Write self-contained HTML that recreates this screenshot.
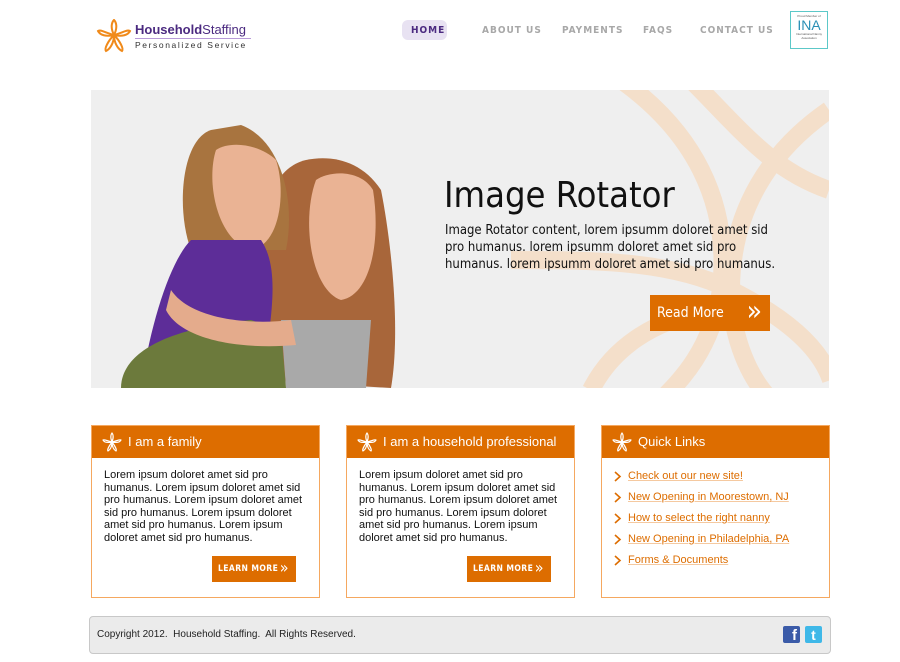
<!DOCTYPE html>
<html><head><meta charset="utf-8"><style>
*{margin:0;padding:0;box-sizing:border-box}
body{width:900px;height:662px;background:#fff;font-family:"Liberation Sans",sans-serif;position:relative;overflow:hidden}
.abs{position:absolute}
.nav{position:absolute;top:25px;font-family:"DejaVu Sans Condensed","Liberation Sans Narrow",sans-serif;font-size:10px;font-weight:bold;letter-spacing:1px;color:#a8a8a8}
.box{position:absolute;top:425px;width:229px;height:173px;border:1px solid #f5a860;background:#fff}
.box .hd{height:32px;background:#dd6d00;color:#fff;font-size:13px;line-height:32px;padding-left:36px;position:relative}
.box .hd svg{position:absolute;left:10px;top:6px}
.box p{font-size:11px;line-height:12.6px;color:#111;padding:11px 0 0 12px;white-space:nowrap}
.lm{position:absolute;left:120px;top:130px;width:84px;height:26px;background:#dd6d00;color:#fff;font-family:"DejaVu Sans Condensed",sans-serif;font-size:8.5px;font-weight:bold;letter-spacing:0.4px;line-height:26px;padding-left:6px}
.lm span{position:absolute;right:7px;top:-1px;font-size:16px;font-weight:normal}
.ql{font-size:11px;color:#dd6d00;position:absolute;left:26px;text-decoration:underline;text-decoration-color:#f5c9a0}
</style></head><body>
<svg class="abs" style="left:96px;top:19px" width="36" height="34" viewBox="0 0 36 34"><g fill="none" stroke="#f08a1a" stroke-width="2"><path d="M18 16 C14 8 16 3 18 1 C20 3 22 8 18 16Z"/><path d="M18 16 C10 14 4 10 2 12 C4 16 10 18 18 16Z"/><path d="M18 16 C26 14 32 10 34 12 C32 16 26 18 18 16Z"/><path d="M18 16 C12 22 8 30 10 32 C14 30 18 24 18 16Z"/><path d="M18 16 C24 22 28 30 26 32 C22 30 18 24 18 16Z"/></g></svg>
<div class="abs" style="left:135px;top:22px;font-size:13px;color:#4b2a80"><b>Household</b>Staffing</div>
<div class="abs" style="left:135px;top:38px;width:116px;border-top:1px solid #b79ad8"></div>
<div class="abs" style="left:135px;top:40px;font-size:8.5px;letter-spacing:1.6px;color:#333">Personalized Service</div>
<div class="abs" style="left:402px;top:20px;width:45px;height:20px;background:#e8e2f2;border-radius:6px"></div>
<div class="nav" style="left:411px;color:#4b2a80">HOME</div>
<div class="nav" style="left:482px">ABOUT US</div>
<div class="nav" style="left:562px">PAYMENTS</div>
<div class="nav" style="left:643px">FAQS</div>
<div class="nav" style="left:700px">CONTACT US</div>
<div class="abs" style="left:790px;top:11px;width:38px;height:38px;border:1px solid #5cc8c8;text-align:center;font-size:3px;color:#555;padding-top:2px">Proud Member of<div style="font-size:14px;color:#2a8fb5;line-height:14px">INA</div>International Nanny Association</div>
<div class="abs" style="left:91px;top:90px;width:738px;height:298px;background:#efefef;overflow:hidden">
<svg width="738" height="298" style="position:absolute;left:0;top:0">
<g fill="none" stroke="#f4dfca" stroke-width="18">
<path d="M530 -10 C600 40 640 110 630 200 C620 260 590 290 570 310"/>
<path d="M738 20 C680 60 640 120 640 200 C640 250 660 290 680 310"/>
<path d="M420 170 C500 170 580 170 640 200 C700 230 730 260 740 290"/>
<path d="M600 -10 C650 40 680 80 738 100"/>
<path d="M500 300 C520 260 560 230 620 220"/>
</g>
<path d="M215 70 C170 80 155 160 170 290 L300 298 C310 240 300 150 290 100 C270 70 240 65 215 70Z" fill="#a8663a"/>
<path d="M120 40 C90 50 85 120 100 160 L195 160 C205 110 190 50 150 35Z" fill="#a8743f"/>
<path d="M125 60 C115 90 125 150 160 160 C190 155 195 100 185 70 C170 55 140 50 125 60Z" fill="#eab394"/>
<path d="M225 90 C210 130 220 200 250 210 C280 205 290 150 282 100 C270 80 240 80 225 90Z" fill="#eab394"/>
<path d="M100 150 C80 170 60 230 50 298 L170 298 C180 230 190 180 170 150Z" fill="#5d2d98"/>
<path d="M190 230 L280 230 L275 298 L195 298Z" fill="#a9a9a9"/>
<path d="M30 298 C30 270 60 240 160 230 L190 240 L195 298Z" fill="#6c7a3c"/>
<path d="M80 200 C100 230 160 235 200 230 L205 255 C150 260 90 250 75 220Z" fill="#e4ab8c"/>
</svg>
<div class="abs" style="left:353px;top:85px;font-family:'DejaVu Sans Condensed','DejaVu Sans',sans-serif;font-size:36px;color:#111">Image Rotator</div>
<div class="abs" style="left:354px;top:132px;white-space:nowrap;font-family:'DejaVu Sans Condensed','DejaVu Sans',sans-serif;font-size:13px;line-height:17px;color:#111">Image Rotator content, lorem ipsumm doloret amet sid<br>pro humanus. lorem ipsumm doloret amet sid pro<br>humanus. lorem ipsumm doloret amet sid pro humanus.</div>
<div class="abs" style="left:559px;top:205px;width:120px;height:36px;background:#dd6d00;color:#fff;font-family:'DejaVu Sans Condensed',sans-serif;font-size:14px;line-height:36px;padding-left:7px">Read More<span style="position:absolute;right:8px;font-size:28px;top:-2px">»</span></div>
</div>
<div class="box" style="left:91px"><div class="hd"><svg width="20" height="20" viewBox="0 0 20 20" fill="none" stroke="#fff" stroke-width="1.2"><path d="M10 10C8 5 9 2 10 1C11 2 12 5 10 10ZM10 10C5 9 2 7 1 8C2 10 5 11 10 10ZM10 10C15 9 18 7 19 8C18 10 15 11 10 10ZM10 10C7 14 5 18 6 19C8 18 10 15 10 10ZM10 10C13 14 15 18 14 19C12 18 10 15 10 10Z"/></svg>I am a family</div>
<p>Lorem ipsum doloret amet sid pro<br>humanus. Lorem ipsum doloret amet sid<br>pro humanus. Lorem ipsum doloret amet<br>sid pro humanus. Lorem ipsum doloret<br>amet sid pro humanus. Lorem ipsum<br>doloret amet sid pro humanus.</p>
<div class="lm">LEARN MORE<span>»</span></div></div>
<div class="box" style="left:346px"><div class="hd"><svg width="20" height="20" viewBox="0 0 20 20" fill="none" stroke="#fff" stroke-width="1.2"><path d="M10 10C8 5 9 2 10 1C11 2 12 5 10 10ZM10 10C5 9 2 7 1 8C2 10 5 11 10 10ZM10 10C15 9 18 7 19 8C18 10 15 11 10 10ZM10 10C7 14 5 18 6 19C8 18 10 15 10 10ZM10 10C13 14 15 18 14 19C12 18 10 15 10 10Z"/></svg>I am a household professional</div>
<p>Lorem ipsum doloret amet sid pro<br>humanus. Lorem ipsum doloret amet sid<br>pro humanus. Lorem ipsum doloret amet<br>sid pro humanus. Lorem ipsum doloret<br>amet sid pro humanus. Lorem ipsum<br>doloret amet sid pro humanus.</p>
<div class="lm">LEARN MORE<span>»</span></div></div>
<div class="box" style="left:601px"><div class="hd"><svg width="20" height="20" viewBox="0 0 20 20" fill="none" stroke="#fff" stroke-width="1.2"><path d="M10 10C8 5 9 2 10 1C11 2 12 5 10 10ZM10 10C5 9 2 7 1 8C2 10 5 11 10 10ZM10 10C15 9 18 7 19 8C18 10 15 11 10 10ZM10 10C7 14 5 18 6 19C8 18 10 15 10 10ZM10 10C13 14 15 18 14 19C12 18 10 15 10 10Z"/></svg>Quick Links</div>
<div class="abs" style="left:0;top:44px;width:227px">
<svg class="abs" style="left:12px;top:1px" width="8" height="11"><path d="M1 1L6 5.5L1 10" fill="none" stroke="#dd6d00" stroke-width="1.6"/></svg><span class="ql" style="top:0">Check out our new site!</span>
<svg class="abs" style="left:12px;top:22px" width="8" height="11"><path d="M1 1L6 5.5L1 10" fill="none" stroke="#dd6d00" stroke-width="1.6"/></svg><span class="ql" style="top:21px">New Opening in Moorestown, NJ</span>
<svg class="abs" style="left:12px;top:43px" width="8" height="11"><path d="M1 1L6 5.5L1 10" fill="none" stroke="#dd6d00" stroke-width="1.6"/></svg><span class="ql" style="top:42px">How to select the right nanny</span>
<svg class="abs" style="left:12px;top:64px" width="8" height="11"><path d="M1 1L6 5.5L1 10" fill="none" stroke="#dd6d00" stroke-width="1.6"/></svg><span class="ql" style="top:63px">New Opening in Philadelphia, PA</span>
<svg class="abs" style="left:12px;top:85px" width="8" height="11"><path d="M1 1L6 5.5L1 10" fill="none" stroke="#dd6d00" stroke-width="1.6"/></svg><span class="ql" style="top:84px">Forms &amp; Documents</span>
</div>
</div>
<div class="abs" style="left:89px;top:616px;width:742px;height:38px;background:#ebebeb;border:1px solid #c8c8c8;border-radius:4px"></div>
<div class="abs" style="left:97px;top:629px;font-size:10px;color:#222">Copyright 2012.&nbsp; Household Staffing.&nbsp; All Rights Reserved.</div>
<div class="abs" style="left:783px;top:626px;width:17px;height:17px;background:#3b5ba8;border-radius:2px;color:#fff;font-weight:bold;font-size:15px;text-align:right;padding-right:3px;line-height:20px">f</div>
<div class="abs" style="left:805px;top:626px;width:17px;height:17px;background:#3fb8e8;border-radius:2px;color:#fff;font-weight:bold;font-size:14px;text-align:center;line-height:18px">t</div>
</body></html>
